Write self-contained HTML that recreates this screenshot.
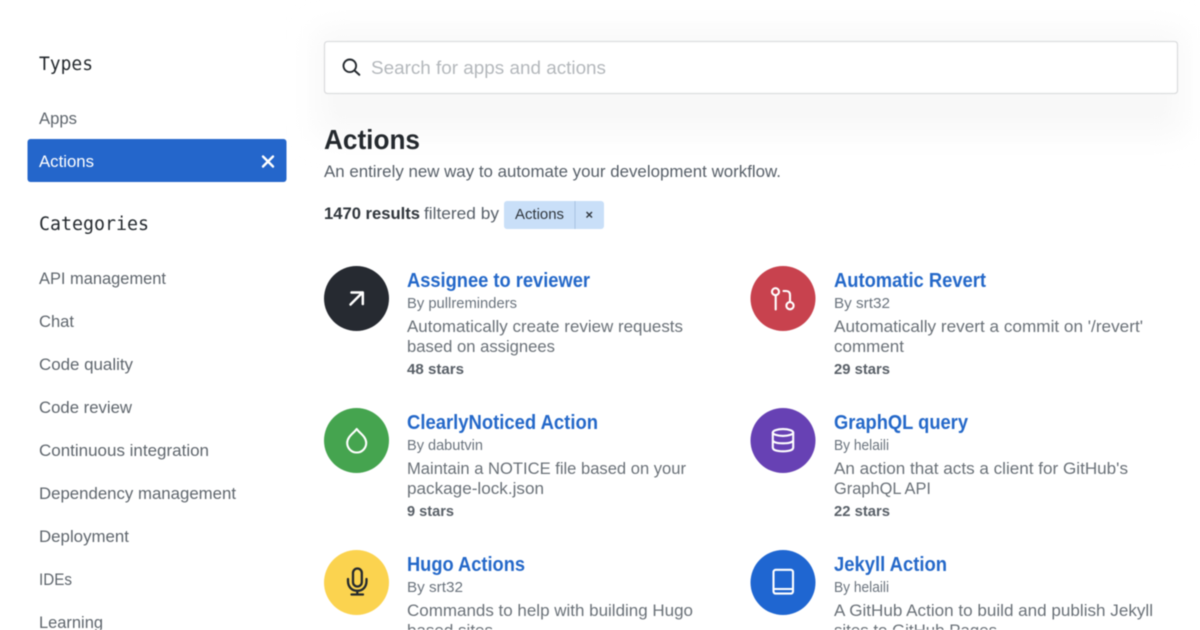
<!DOCTYPE html>
<html><head><meta charset="utf-8"><style>
html,body{margin:0;padding:0;background:#fff;width:1200px;height:630px;overflow:hidden}
svg{display:block;filter:blur(.5px)}
text{font-family:"Liberation Sans",sans-serif;white-space:pre}
.m{font-family:"DejaVu Sans Mono","Liberation Mono",monospace;font-size:18.500px;fill:#24292e}
.n{font-size:16.500px;fill:#5f666d}
.t{font-size:20px;font-weight:700;fill:#2468c9}
.b{font-size:15px;fill:#6a737d}
.d{font-size:16.500px;fill:#6a7178}
.s{font-size:14.500px;font-weight:700;fill:#585f67}
.i{fill:none;stroke:#fff;stroke-width:2.100;stroke-linecap:round;stroke-linejoin:round}
.k{fill:none;stroke:#24292e;stroke-width:2.300;stroke-linecap:round;stroke-linejoin:round}
</style></head><body>
<svg xmlns="http://www.w3.org/2000/svg" width="1200" height="630" viewBox="0 0 1200 630">
<defs><filter id="g" x="-10%" y="-60%" width="120%" height="220%"><feGaussianBlur stdDeviation="14"/></filter></defs>
<rect x="316" y="30" width="868" height="105" fill="#f8f8f8" filter="url(#g)"/>

<text class="m" x="39" y="70" textLength="54" lengthAdjust="spacingAndGlyphs">Types</text>
<text class="n" x="39" y="124" textLength="38" lengthAdjust="spacingAndGlyphs">Apps</text>
<rect x="27.500" y="139" width="259" height="43" rx="3" fill="#2466cb"/>
<text class="n" x="39" y="167" textLength="55" lengthAdjust="spacingAndGlyphs" style="fill:#fff">Actions</text>
<path d="M263 156.500l10 10M273 156.500l-10 10" fill="none" stroke="#fff" stroke-width="2.400" stroke-linecap="round"/>
<text class="m" x="39" y="230" textLength="110" lengthAdjust="spacingAndGlyphs">Categories</text>
<text class="n" x="39" y="284" textLength="127" lengthAdjust="spacingAndGlyphs">API management</text>
<text class="n" x="39" y="327" textLength="35" lengthAdjust="spacingAndGlyphs">Chat</text>
<text class="n" x="39" y="370" textLength="94" lengthAdjust="spacingAndGlyphs">Code quality</text>
<text class="n" x="39" y="413" textLength="93" lengthAdjust="spacingAndGlyphs">Code review</text>
<text class="n" x="39" y="456" textLength="170" lengthAdjust="spacingAndGlyphs">Continuous integration</text>
<text class="n" x="39" y="499" textLength="197" lengthAdjust="spacingAndGlyphs">Dependency management</text>
<text class="n" x="39" y="542" textLength="90" lengthAdjust="spacingAndGlyphs">Deployment</text>
<text class="n" x="39" y="585" textLength="33" lengthAdjust="spacingAndGlyphs">IDEs</text>
<text class="n" x="39" y="628" textLength="64" lengthAdjust="spacingAndGlyphs">Learning</text>

<rect x="324.500" y="41.500" width="853" height="52" rx="3" fill="#fff" stroke="#dcdddf" stroke-width="1.300"/>
<circle cx="349.800" cy="65.800" r="6.300" class="k" style="stroke-width:1.900"/><path d="M354.500 70.500L359.300 74.800" class="k" style="stroke-width:2"/>
<text x="371" y="74" font-size="18.500" fill="#b4b8bc" textLength="235" lengthAdjust="spacingAndGlyphs">Search for apps and actions</text>
<text x="324" y="149" font-size="28" font-weight="700" fill="#24292e" textLength="96" lengthAdjust="spacingAndGlyphs">Actions</text>
<text x="324" y="177" font-size="16.500" fill="#586069" textLength="457" lengthAdjust="spacingAndGlyphs">An entirely new way to automate your development workflow.</text>
<text x="324" y="219" font-size="16.500" font-weight="700" fill="#2f353b" textLength="96" lengthAdjust="spacingAndGlyphs">1470 results</text>
<text x="424" y="219" font-size="16.500" fill="#586069" textLength="75" lengthAdjust="spacingAndGlyphs">filtered by</text>
<rect x="504" y="201" width="100" height="28" rx="3" fill="#c9dff8"/>
<rect x="574.500" y="201" width="1" height="28" fill="#a9c3e2"/>
<text x="515" y="219" font-size="14.500" fill="#2f363d" textLength="49" lengthAdjust="spacingAndGlyphs">Actions</text>
<path d="M586.500 212l5.500 5.500M592 212l-5.500 5.500" fill="none" stroke="#2f363d" stroke-width="1.400"/>

<circle cx="356.500" cy="298.500" r="32.500" fill="#262a31"/>
<path d="M350.500 304.500L362.500 292.500M351.500 292.500H362.800V304" class="i" style="stroke-width:2.500"/>
<circle cx="783" cy="298.500" r="32.500" fill="#c8424e"/>
<circle cx="775.500" cy="291.700" r="3.500" class="i"/><path d="M775.700 295.500V309.500" class="i"/>
<circle cx="790" cy="305.700" r="3.600" class="i"/><path d="M790 302V295Q790 291 786 291H783.500" class="i"/>
<circle cx="356.500" cy="440.500" r="32.500" fill="#45a44f"/>
<path d="M356.700 429C354 433 347.200 436.500 347.200 443A9.500 9.500 0 0 0 366.200 443C366.200 436.500 359.400 433 356.700 429Z" class="i"/>
<circle cx="783" cy="440.500" r="32.500" fill="#6741b4"/>
<ellipse cx="783" cy="432.500" rx="10.200" ry="3.400" class="i"/>
<path d="M772.800 432.500V447.500C772.800 450 777 451.300 783 451.300C789 451.300 793.200 450 793.200 447.500V432.500M772.800 440C772.800 442.200 777 443.300 783 443.300C789 443.300 793.200 442.200 793.200 440" class="i"/>
<circle cx="356.500" cy="582.500" r="32.500" fill="#fbd34f"/>
<rect x="353" y="568.500" width="8.800" height="18" rx="4.400" class="k"/>
<path d="M348 579V581C348 587 352 590.800 357.300 590.800C362.600 590.800 366.500 587 366.500 581V579M357.300 590.800V594.500M351.500 594.500H363" class="k"/>
<circle cx="783" cy="582.500" r="32.500" fill="#1f66d1"/>
<rect x="773.500" y="569.800" width="19.500" height="23.800" rx="2.200" class="i"/>
<path d="M774.500 589H793" class="i"/>

<text class="t" x="407" y="287" textLength="183" lengthAdjust="spacingAndGlyphs">Assignee to reviewer</text>
<text class="b" x="407" y="308" textLength="110" lengthAdjust="spacingAndGlyphs">By pullreminders</text>
<text class="d" x="407" y="332" textLength="276" lengthAdjust="spacingAndGlyphs">Automatically create review requests</text>
<text class="d" x="407" y="352" textLength="148" lengthAdjust="spacingAndGlyphs">based on assignees</text>
<text class="s" x="407" y="374" textLength="57" lengthAdjust="spacingAndGlyphs">48 stars</text>

<text class="t" x="834" y="287" textLength="152" lengthAdjust="spacingAndGlyphs">Automatic Revert</text>
<text class="b" x="834" y="308" textLength="56" lengthAdjust="spacingAndGlyphs">By srt32</text>
<text class="d" x="834" y="332" textLength="309" lengthAdjust="spacingAndGlyphs">Automatically revert a commit on '/revert'</text>
<text class="d" x="834" y="352" textLength="70" lengthAdjust="spacingAndGlyphs">comment</text>
<text class="s" x="834" y="374" textLength="56" lengthAdjust="spacingAndGlyphs">29 stars</text>

<text class="t" x="407" y="429" textLength="191" lengthAdjust="spacingAndGlyphs">ClearlyNoticed Action</text>
<text class="b" x="407" y="450" textLength="76" lengthAdjust="spacingAndGlyphs">By dabutvin</text>
<text class="d" x="407" y="474" textLength="279" lengthAdjust="spacingAndGlyphs">Maintain a NOTICE file based on your</text>
<text class="d" x="407" y="494" textLength="137" lengthAdjust="spacingAndGlyphs">package-lock.json</text>
<text class="s" x="407" y="516" textLength="47" lengthAdjust="spacingAndGlyphs">9 stars</text>

<text class="t" x="834" y="429" textLength="134" lengthAdjust="spacingAndGlyphs">GraphQL query</text>
<text class="b" x="834" y="450" textLength="55" lengthAdjust="spacingAndGlyphs">By helaili</text>
<text class="d" x="834" y="474" textLength="294" lengthAdjust="spacingAndGlyphs">An action that acts a client for GitHub's</text>
<text class="d" x="834" y="494" textLength="97" lengthAdjust="spacingAndGlyphs">GraphQL API</text>
<text class="s" x="834" y="516" textLength="56" lengthAdjust="spacingAndGlyphs">22 stars</text>

<text class="t" x="407" y="571" textLength="118" lengthAdjust="spacingAndGlyphs">Hugo Actions</text>
<text class="b" x="407" y="592" textLength="56" lengthAdjust="spacingAndGlyphs">By srt32</text>
<text class="d" x="407" y="616" textLength="286" lengthAdjust="spacingAndGlyphs">Commands to help with building Hugo</text>
<text class="d" x="407" y="636" textLength="86" lengthAdjust="spacingAndGlyphs">based sites</text>

<text class="t" x="834" y="571" textLength="113" lengthAdjust="spacingAndGlyphs">Jekyll Action</text>
<text class="b" x="834" y="592" textLength="55" lengthAdjust="spacingAndGlyphs">By helaili</text>
<text class="d" x="834" y="616" textLength="319" lengthAdjust="spacingAndGlyphs">A GitHub Action to build and publish Jekyll</text>
<text class="d" x="834" y="636" textLength="163" lengthAdjust="spacingAndGlyphs">sites to GitHub Pages</text>
</svg>
</body></html>
